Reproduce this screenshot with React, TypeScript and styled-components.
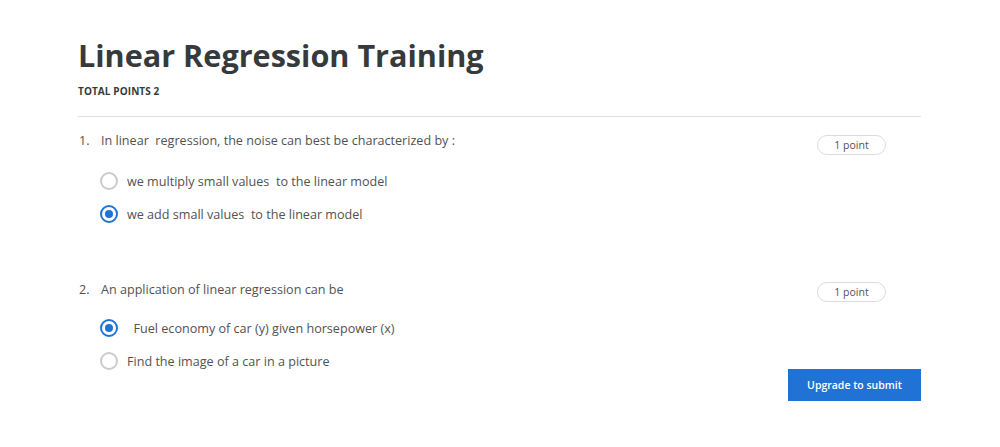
import React from "react";
import styled, { createGlobalStyle } from "styled-components";

const GlobalStyle = createGlobalStyle`
  body {
    margin: 0;
    background: #ffffff;
    font-family: "Open Sans", "Liberation Sans", sans-serif;
    color: #3d3d3d;
  }
`;

const Page = styled.div`
  width: 843px;
  margin: 0 0 0 78px;
  padding-top: 33px;
`;

const Title = styled.h1`
  margin: 0;
  font-size: 30.6px;
  line-height: 44px;
  font-weight: 700;
  color: #373a3c;
`;

const TotalPoints = styled.div`
  margin-top: 7px;
  font-size: 10px;
  font-weight: 700;
  letter-spacing: 0.1px;
  color: #373a3c;
  text-transform: uppercase;
`;

const Divider = styled.hr`
  margin: 18px 0 0;
  border: 0;
  border-top: 1px solid #e1e1e1;
`;

const Question = styled.section<{ $top: number }>`
  margin-top: ${(p) => p.$top}px;
`;

const QuestionRow = styled.div`
  display: flex;
  align-items: flex-start;
  justify-content: space-between;
  padding-right: 35px;
`;

const Prompt = styled.div`
  display: flex;
  font-size: 12.6px;
  line-height: 18px;
  color: #525252;
  white-space: pre;
`;

const Num = styled.span`
  width: 22px;
  padding-left: 1px;
`;

const Pill = styled.span<{ $offset: number }>`
  display: inline-flex;
  align-items: center;
  justify-content: center;
  width: 69px;
  height: 20px;
  margin-top: ${(p) => p.$offset}px;
  box-sizing: border-box;
  border: 1px solid #dcdcdc;
  border-radius: 10px;
  font-size: 10.5px;
  color: #525252;
`;

const Options = styled.div`
  display: flex;
  flex-direction: column;
  gap: 13px;
  margin-top: 16px;
  padding-left: 22px;
`;

const Option = styled.label`
  display: flex;
  align-items: center;
  gap: 9px;
  height: 20px;
  font-size: 12.6px;
  color: #525252;
  white-space: pre;
`;

const Radio = styled.span<{ $checked?: boolean }>`
  width: 18px;
  height: 18px;
  box-sizing: border-box;
  border-radius: 50%;
  border: 2px solid ${(p) => (p.$checked ? "#2073d5" : "#cbcbcb")};
  display: flex;
  align-items: center;
  justify-content: center;
  &::after {
    content: "";
    width: 8px;
    height: 8px;
    border-radius: 50%;
    background: ${(p) => (p.$checked ? "#2073d5" : "transparent")};
  }
`;

const Footer = styled.div`
  display: flex;
  justify-content: flex-end;
  margin-top: -2px;
`;

const SubmitButton = styled.button`
  width: 133px;
  height: 32px;
  border: 0;
  border-radius: 0;
  background: #2073d5;
  color: #ffffff;
  font-family: "Open Sans", "Liberation Sans", sans-serif;
  font-size: 10.5px;
  font-weight: 600;
  cursor: pointer;
`;

type Q = {
  num: string;
  text: string;
  top: number;
  pillOffset: number;
  options: { text: string; checked?: boolean }[];
};

const questions: Q[] = [
  {
    num: "1.",
    text: "In linear  regression, the noise can best be characterized by :",
    top: 15,
    pillOffset: 3,
    options: [
      { text: "we multiply small values  to the linear model" },
      { text: "we add small values  to the linear model", checked: true },
    ],
  },
  {
    num: "2.",
    text: "An application of linear regression can be",
    top: 57,
    pillOffset: 1,
    options: [
      { text: "  Fuel economy of car (y) given horsepower (x)", checked: true },
      { text: "Find the image of a car in a picture" },
    ],
  },
];

export default function App() {
  return (
    <>
      <GlobalStyle />
      <Page>
        <Title>Linear Regression Training</Title>
        <TotalPoints>Total points 2</TotalPoints>
        <Divider />
        {questions.map((q) => (
          <Question key={q.num} $top={q.top}>
            <QuestionRow>
              <Prompt>
                <Num>{q.num}</Num>
                {q.text}
              </Prompt>
              <Pill $offset={q.pillOffset}>1 point</Pill>
            </QuestionRow>
            <Options>
              {q.options.map((o) => (
                <Option key={o.text}>
                  <Radio $checked={o.checked} />
                  {o.text}
                </Option>
              ))}
            </Options>
          </Question>
        ))}
        <Footer>
          <SubmitButton>Upgrade to submit</SubmitButton>
        </Footer>
      </Page>
    </>
  );
}
